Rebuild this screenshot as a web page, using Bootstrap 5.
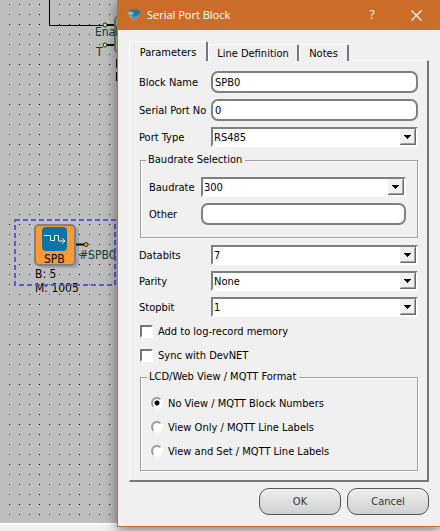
<!DOCTYPE html>
<html lang="en">
<head>
<meta charset="utf-8">
<meta name="viewport" content="width=device-width, initial-scale=1">
<title>Serial Port Block</title>
<link href="https://cdn.jsdelivr.net/npm/bootstrap@5.3.0/dist/css/bootstrap.min.css" rel="stylesheet">
<style>
body{font:11px/14px "DejaVu Sans Condensed","DejaVu Sans",sans-serif;background:#f0f0f0;color:#000}
/* diagram canvas behind the dialog */
.canvas{position:absolute;inset:0 0 6px 0;overflow:hidden;background:#bebebe;border-bottom:2px solid #fff}
.canvas>svg{display:block;width:100%;height:100%}
.canvas text{font-family:"DejaVu Sans Condensed","DejaVu Sans",sans-serif;font-size:12px}
/* dialog */
.dlg{position:relative;margin-left:117px;border:1px solid #cb6d29;border-width:0 0 1px 1px;background:#f0f0f0;box-shadow:0 3px 12px rgba(0,0,0,.5)}
.bar{height:30px;background:#cb6d29;color:#fff;padding:0 17px 0 8px}
.bar h1{font:11px/30px "Open Sans","Noto Sans",sans-serif;padding-left:5px}
.bar button{width:12px;height:30px;color:#fff;font:12px/30px "Open Sans",sans-serif}
.bar .gapper{margin-right:33px}
.content{padding:11px}
.tabs{margin-bottom:-1px;position:relative}
.tabs button{border:0;background:#f0f0f0;border-top:1px solid #fff;border-left:1px solid #fff;border-right:2px solid #777;border-radius:3px 2px 0 0;height:17px;padding:0;font-size:11px;line-height:18px}
.tabs button.on{height:20px;width:79px;line-height:21px}
.tabs .wide{width:91px}
.tabs .thin{width:50px}
.pane{border:2px solid;border-width:1px 2px 2px 1px;border-color:#fff #777 #777 #fff;padding:10px 9px 9px 10px}
.line{display:grid;grid-template-columns:71px minmax(0,1fr);align-items:center;margin-bottom:6px}
.line label{margin-left:-1px;padding-top:2px;white-space:nowrap}
.box{width:100%;height:22px;border:2px solid #808080;border-radius:7px;background:#fff;padding:1px 2px 0;outline:0;font-size:11px;color:#000}
.pick{appearance:none;width:100%;height:20px;border:2px solid;border-color:#808080 #fff #fff #808080;border-radius:0;padding:2px 18px 0 1px;font-size:11px;line-height:14px;color:#000;outline:0;
background:#fff url("data:image/svg+xml,%3Csvg xmlns='http://www.w3.org/2000/svg' width='16' height='16' shape-rendering='crispEdges'%3E%3Cpath fill='%23f0f0f0' d='M0 0h16v16H0z'/%3E%3Cpath fill='%23696969' d='M15 0h1v16H0v-1h15z'/%3E%3Cpath fill='%23a0a0a0' d='M14 1h1v14H1v-1h13z'/%3E%3Cpath d='M4 6h7v1h-1v1h-1v1h-1v1h-1v-1h-1v-1h-1v-1h-1z'/%3E%3C/svg%3E") right 0 top 0 no-repeat}
.grp{border:1px solid #a0a0a0;box-shadow:1px 1px #fff,inset 1px 1px #fff;min-width:0}
.grp legend{float:none;width:auto;font-size:11px;line-height:14px;margin:0 0 0 -4px;padding:0 3px 0 2px;background:#f0f0f0}
.g1{padding:10px 11px 12px 9px;margin-bottom:7px}
.g1 .line{grid-template-columns:51px minmax(0,1fr)}
.g1 .line:last-child{margin:0}
.g2{padding:12px 9px 12px 10px}
.opt{height:14px;margin-bottom:10px}
.opt label{padding-top:1px}
.opt input{appearance:none;margin:0;flex:none}
.opt [type=checkbox]{width:13px;height:13px;border:2px solid;border-color:#777 #fff #fff #777;background:#fff;margin-right:5px}
.opt [type=radio]{width:12px;height:12px;border-radius:50%;border:2px solid;border-color:#999 #fff #fff #999;background:#fff;margin-right:5px}
.opt [type=radio]:checked{background:radial-gradient(circle,#000 2px,#fff 3px)}
.checks{padding-top:1px}
.foot{gap:6px;margin-top:6px}
.foot button{width:82px;height:27px;border:1px solid #555;border-radius:10px;background:linear-gradient(#eee,#d0d0d0);color:#333;font-size:11px;padding:0}
</style>
</head>
<body class="min-vh-100 position-relative overflow-hidden">
<div class="canvas">
<svg aria-label="Block diagram">
<defs><pattern id="dots" width="10" height="10" patternUnits="userSpaceOnUse"><path d="M9 4h1v1H9z"/></pattern></defs>
<rect width="100%" height="100%" fill="url(#dots)"/>
<path d="M49.500 0V25.500H105" fill="none" stroke="#000"/>
<path d="M106 25h10M106 45h10" stroke="#000" stroke-width="2"/>
<rect x="115" y="16" width="40" height="37" rx="5" fill="#b0e080" stroke="#777" stroke-width="2"/>
<g fill="#c4f49a" stroke="#243010"><circle cx="105" cy="25" r="2"/><circle cx="105" cy="45" r="2"/></g>
<g fill="#0c4038"><text x="95" y="36">Enable</text><text x="96" y="56">T</text></g>
<path d="M116.500 59v9M116.500 72v9" stroke="#000"/>
<rect x="38" y="227" width="41" height="41" rx="5" fill="#a4a4a4"/>
<rect x="35" y="225" width="40" height="40" rx="4" fill="#ff9933" stroke="#808080" stroke-width="2"/>
<rect x="42" y="227" width="25" height="24" rx="4" fill="#0874a8"/>
<path d="M44 235.500h6.500v5h4v-5h4v5.500h6.500M62 238l3 3-3 3" fill="none" stroke="#fff"/>
<text x="44" y="263">SPB</text>
<path d="M76 244.500h8" stroke="#000" stroke-width="2"/><circle cx="86" cy="244.500" r="2" fill="#ff9933" stroke="#402000"/>
<text x="79" y="259" fill="#0c4038">#SPB0</text>
<text x="35" y="278">B: 5</text><text x="35" y="292">M: 1005</text>
<rect x="15" y="220" width="100" height="65" fill="none" stroke="#5a5ae0" stroke-width="2" stroke-dasharray="5 3"/>
</svg>
</div>
<main class="dlg">
<header class="bar d-flex align-items-center">
<svg width="16" height="14" viewBox="0 0 16 14" aria-hidden="true"><path d="M1 4l7 1 7-1-2 4-5 5-4-4z" fill="#e69a5c"/><path d="M1 5l3-3 5-1 4 1 2 3-3 3-4 1-4-1z" fill="#2b7896"/><path d="M1 5l3-2 4 2-3 3z" fill="#8fb9bc"/><path d="M5 7l4 1 3-1-2 4-2 1-2-2z" fill="#2c9bcd"/></svg>
<h1 class="m-0 flex-grow-1">Serial Port Block</h1>
<button type="button" class="btn border-0 p-0 gapper" aria-label="Help">?</button>
<button type="button" class="btn border-0 p-0 d-flex align-items-center" aria-label="Close"><svg width="11" height="11" viewBox="0 0 11 11"><path d="M.5.500l10 10M10.500.500l-10 10" stroke="#fff" stroke-width="1.200"/></svg></button>
</header>
<form class="content">
<div class="tabs d-flex align-items-end" role="tablist">
<button type="button" class="on" role="tab" aria-selected="true">Parameters</button><button type="button" class="wide" role="tab">Line Definition</button><button type="button" class="thin" role="tab">Notes</button>
</div>
<section class="pane">
<div class="line"><label for="bn">Block Name</label><input class="box" id="bn" value="SPB0"></div>
<div class="line"><label for="sp">Serial Port No</label><input class="box" id="sp" value="0"></div>
<div class="line"><label for="pt">Port Type</label><select class="pick" id="pt"><option>RS485</option></select></div>
<fieldset class="grp g1"><legend>Baudrate Selection</legend>
<div class="line"><label for="br">Baudrate</label><select class="pick" id="br"><option>300</option></select></div>
<div class="line"><label for="ot">Other</label><input class="box" id="ot"></div>
</fieldset>
<div class="line"><label for="db">Databits</label><select class="pick" id="db"><option>7</option></select></div>
<div class="line"><label for="pa">Parity</label><select class="pick" id="pa"><option>None</option></select></div>
<div class="line"><label for="sb">Stopbit</label><select class="pick" id="sb"><option>1</option></select></div>
<div class="checks">
<div class="opt d-flex align-items-center"><input type="checkbox" id="c1"><label for="c1">Add to log-record memory</label></div>
<div class="opt d-flex align-items-center mb-2"><input type="checkbox" id="c2"><label for="c2">Sync with DevNET</label></div>
</div>
<fieldset class="grp g2"><legend>LCD/Web View / MQTT Format</legend>
<div class="opt d-flex align-items-center"><input type="radio" name="v" id="r1" checked><label for="r1">No View / MQTT Block Numbers</label></div>
<div class="opt d-flex align-items-center"><input type="radio" name="v" id="r2"><label for="r2">View Only / MQTT Line Labels</label></div>
<div class="opt d-flex align-items-center mb-0"><input type="radio" name="v" id="r3"><label for="r3">View and Set / MQTT Line Labels</label></div>
</fieldset>
</section>
<div class="foot d-flex justify-content-end"><button type="button">OK</button><button type="button">Cancel</button></div>
</form>
</main>
<script src="https://cdn.jsdelivr.net/npm/bootstrap@5.3.0/dist/js/bootstrap.bundle.min.js"></script>
</body>
</html>
